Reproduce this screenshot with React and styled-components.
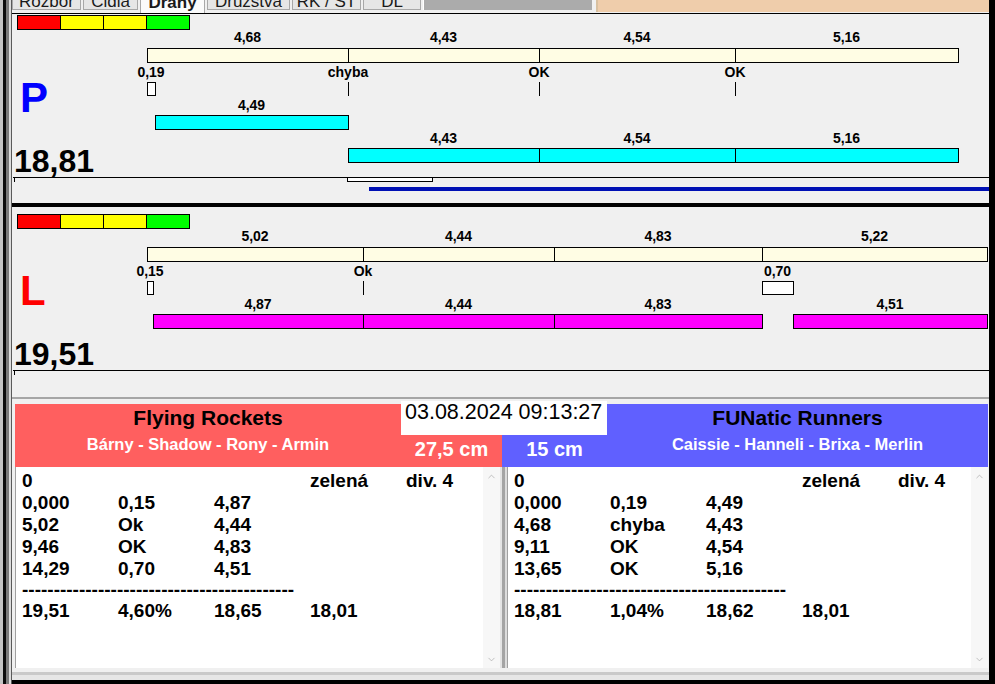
import React from 'react';
import styled, { createGlobalStyle } from 'styled-components';
import { ChevronUp, ChevronDown } from 'lucide-react';

const GlobalStyle = createGlobalStyle`
  html, body {
    margin: 0;
    padding: 0;
  }
  body {
    background: #111;
    font-family: "Liberation Sans", Arial, sans-serif;
  }
`;

// page x of the left edge of the lane panels
const ORIGIN_X = 12;
const px = (x) => x - ORIGIN_X;

// vertical layout of a track (relative to the track top)
const LABEL_TOP = 15;
const BAR_TOP = 33;
const TICK_LABEL_TOP = 50;
const TICK_TOP = 67;
const ROW_LABEL_TOP = [83, 116];
const ROW_BAR_TOP = [100, 133];

const lanes = [
  {
    id: 'P',
    color: '#0000ff',
    time: '18,81',
    height: 189,
    trackTop: 1,
    split: [147, 348, 539, 735, 958],
    splitLabels: ['4,68', '4,43', '4,54', '5,16'],
    ticks: [
      { x: 147, w: 8, label: '0,19' },
      { x: 348, label: 'chyba' },
      { x: 539, label: 'OK' },
      { x: 735, label: 'OK' },
    ],
    runs: [
      { row: 0, from: 155, to: 348, label: '4,49' },
      { row: 1, from: 348, to: 539, label: '4,43' },
      { row: 1, from: 539, to: 735, label: '4,54' },
      { row: 1, from: 735, to: 958, label: '5,16' },
    ],
    runColor: '#00ffff',
    mark: { from: 347, to: 433 },
    progressFrom: 369,
  },
  {
    id: 'L',
    color: '#ff0000',
    time: '19,51',
    height: 190,
    trackTop: 7,
    split: [147, 363, 554, 762, 987],
    splitLabels: ['5,02', '4,44', '4,83', '5,22'],
    ticks: [
      { x: 147, w: 6, label: '0,15' },
      { x: 363, label: 'Ok' },
      { x: 762, w: 31, label: '0,70' },
    ],
    runs: [
      { row: 0, from: 153, to: 363, label: '4,87' },
      { row: 0, from: 363, to: 554, label: '4,44' },
      { row: 0, from: 554, to: 762, label: '4,83' },
      { row: 0, from: 793, to: 987, label: '4,51' },
    ],
    runColor: '#ff00ff',
  },
];

const tabs = [
  { label: 'Rozbor', w: 69 },
  { label: 'Čidla', w: 55 },
  { label: 'Dráhy', w: 65, active: true },
  { label: 'Družstva', w: 83 },
  { label: 'RK / ST', w: 69 },
  { label: 'DL', w: 58 },
];

const teams = [
  {
    name: 'Flying Rockets',
    members: 'Bárny - Shadow - Rony - Armin',
    distance: '27,5 cm',
    bg: '#ff5f5f',
    side: 'left',
    rows: [
      ['0', '', '', 'zelená', 'div. 4'],
      ['0,000', '0,15', '4,87'],
      ['5,02', 'Ok', '4,44'],
      ['9,46', 'OK', '4,83'],
      ['14,29', '0,70', '4,51'],
      'dash',
      ['19,51', '4,60%', '18,65', '18,01'],
    ],
  },
  {
    name: 'FUNatic Runners',
    members: 'Caissie - Hanneli - Brixa - Merlin',
    distance: '15 cm',
    bg: '#6060ff',
    side: 'right',
    rows: [
      ['0', '', '', 'zelená', 'div. 4'],
      ['0,000', '0,19', '4,49'],
      ['4,68', 'chyba', '4,43'],
      ['9,11', 'OK', '4,54'],
      ['13,65', 'OK', '5,16'],
      'dash',
      ['18,81', '1,04%', '18,62', '18,01'],
    ],
  },
];

const Screen = styled.div`
  width: 995px;
  height: 684px;
  display: flex;
  overflow: hidden;
`;

const EdgeStrip = styled.div`
  flex: none;
  width: 11px;
  background: linear-gradient(
    to right,
    #c4c4c4 0 3px,
    #0c0c0c 3px 6px,
    #7a7a7a 6px 9px,
    #dcdcdc 9px 11px
  );
`;

const RightEdge = styled.div`
  flex: none;
  width: 6px;
  background: #000;
`;

const Main = styled.div`
  flex: 1;
  min-width: 0;
  display: flex;
  flex-direction: column;
  background: #f0f0f0;
  border-left: 1px solid #5a5a5a;
`;

const TabStrip = styled.div`
  flex: none;
  height: 13px;
  display: flex;
  gap: 2px;
  align-items: flex-start;
  background: #f0f0f0;
  border-bottom: 1px solid #000;
`;

const Tab = styled.div`
  flex: none;
  width: ${(p) => p.$w}px;
  height: ${(p) => (p.$active ? 13 : 10)}px;
  box-sizing: border-box;
  display: flex;
  align-items: flex-end;
  justify-content: center;
  overflow: hidden;
  background: ${(p) => (p.$active ? '#fbfbfb' : '#e6e6e6')};
  border: 1px solid #a8a8a8;
  border-top: none;
  border-bottom: ${(p) => (p.$active ? 'none' : '1px solid #a8a8a8')};
`;

const TabLabel = styled.span`
  font-size: 17px;
  line-height: 17px;
  margin-bottom: ${(p) => (p.$active ? 2 : -1)}px;
  color: #1a1a1a;
  font-weight: ${(p) => (p.$active ? 'bold' : 'normal')};
  white-space: nowrap;
`;

const GrayFill = styled.div`
  flex: none;
  width: 168px;
  height: 10px;
  background: #ababab;
  border-left: 1px solid #fff;
`;

const PeachFill = styled.div`
  flex: 1;
  height: 12px;
  margin-left: 2px;
  background: #efcdab;
  border-left: 2px solid #d8c0a0;
`;

const LanePanel = styled.section`
  position: relative;
  flex: none;
  height: ${(p) => p.$h}px;
  box-sizing: border-box;
  padding-top: 63px;
  display: flex;
  flex-direction: column;
  background: #f0f0f0;
`;

const LaneDivider = styled.div`
  flex: none;
  height: 4px;
  background: #000;
`;

const Track = styled.div`
  position: absolute;
  left: 0;
  right: 0;
  height: 150px;
`;

const Scale = styled.div`
  display: flex;
  margin-left: 5px;
`;

const ScaleCell = styled.div`
  width: 44px;
  height: 15px;
  box-sizing: border-box;
  border: 1px solid #000;
  background: ${(p) => p.$c};
  & + & {
    margin-left: -1px;
  }
`;

const Segment = styled.div`
  position: absolute;
  height: 15px;
  box-sizing: border-box;
  border: 1px solid #000;
  background: ${(p) => p.$fill};
`;

const Label = styled.div`
  position: absolute;
  transform: translateX(-50%);
  font-size: 14px;
  line-height: 14px;
  font-weight: bold;
  color: #000;
  white-space: nowrap;
`;

const TickLine = styled.div`
  position: absolute;
  width: 1px;
  height: 14px;
  background: #000;
`;

const TickBox = styled.div`
  position: absolute;
  height: 14px;
  box-sizing: border-box;
  border: 1px solid #000;
  background: #fff;
`;

const Letter = styled.div`
  margin-left: 8px;
  height: 42px;
  font-size: 42px;
  line-height: 42px;
  font-weight: bold;
  color: ${(p) => p.$color};
`;

const BigTime = styled.div`
  margin: 27px 0 0 2px;
  height: 30px;
  font-size: 32px;
  line-height: 30px;
  font-weight: bold;
  color: #000;
`;

const Baseline = styled.div`
  position: relative;
  margin: 1px 0 0 1px;
  height: 1px;
  background: #000;
  &::before {
    content: '';
    position: absolute;
    left: 1px;
    top: 1px;
    width: 1px;
    height: 4px;
    background: #000;
  }
`;

const Mark = styled.div`
  position: absolute;
  top: 0;
  height: 5px;
  box-sizing: border-box;
  border: 1px solid #000;
  background: #fff;
`;

const Progress = styled.div`
  margin-top: 9px;
  height: 4px;
  background: #0010b4;
`;

const Scoreboard = styled.div`
  position: relative;
  flex: 1;
  display: flex;
  flex-direction: column;
  background: #f0f0f0;
  border-top: 2px solid #a6a6a6;
  padding: 5px 1px 0 3px;
`;

const HeaderRow = styled.div`
  display: grid;
  grid-template-columns: 487px 1fr;
`;

const TeamHeader = styled.div`
  display: grid;
  grid-template-columns: ${(p) => (p.$side === 'left' ? '386px 1fr' : '105px 1fr')};
  grid-template-rows: 28px 35px;
  background: ${(p) => p.$bg};
  text-align: center;
`;

const TeamName = styled.div`
  grid-row: 1;
  grid-column: ${(p) => (p.$side === 'left' ? 1 : 2)};
  font-size: 21px;
  line-height: 28px;
  font-weight: bold;
  color: #000;
`;

const Members = styled.div`
  grid-row: 2;
  grid-column: ${(p) => (p.$side === 'left' ? 1 : 2)};
  align-self: start;
  padding-top: 2px;
  font-size: 16.5px;
  line-height: 20px;
  font-weight: bold;
  color: #fff;
`;

const Distance = styled.div`
  grid-row: 2;
  grid-column: ${(p) => (p.$side === 'left' ? 2 : 1)};
  align-self: center;
  font-size: 20px;
  font-weight: bold;
  color: #fff;
`;

const DateBox = styled.div`
  position: absolute;
  left: 389px;
  top: 2px;
  width: 206px;
  height: 34px;
  box-sizing: border-box;
  padding: 1px 0 0 4px;
  background: #fff;
  font-size: 21.5px;
  line-height: 1;
  color: #000;
  white-space: nowrap;
`;

const ListRow = styled.div`
  display: grid;
  grid-template-columns: 485px 481px;
  column-gap: 7px;
  height: 201px;
  background: linear-gradient(
    to right,
    transparent 0 485px,
    #e4e4e4 485px 487px,
    #a4a4a4 487px 490px,
    #dcdcdc 490px 492px,
    transparent 492px
  );
`;

const ListBox = styled.div`
  display: flex;
  min-width: 0;
  overflow: hidden;
  background: #fff;
  box-shadow: inset 1px 0 0 #a0a0a0;
`;

const Lines = styled.div`
  flex: 1;
  min-width: 0;
  padding: 3px 0 0 7px;
`;

const Line = styled.div`
  display: grid;
  grid-template-columns: repeat(4, 96px) auto;
  height: ${(p) => (p.$dash ? 20 : 22)}px;
  font-size: 19px;
  line-height: ${(p) => (p.$dash ? 20 : 22)}px;
  font-weight: bold;
  color: #000;
  white-space: nowrap;
`;

const Dashes = styled.span`
  grid-column: 1 / -1;
`;

const Scrollbar = styled.div`
  flex: none;
  width: 17px;
  display: flex;
  flex-direction: column;
  align-items: center;
  justify-content: space-between;
  padding: 4px 0 3px;
  background: #f7f7f7;
  color: #a8a8a8;
`;

const Footer = styled.div`
  flex: 1;
  background: linear-gradient(
    to bottom,
    #f0f0f0 0 4px,
    #c9c9c9 4px 7px,
    #e6e6e6 7px 12px,
    #000 12px
  );
  margin: 0 -1px 0 -3px;
`;

function Lane({ lane }) {
  const { split, splitLabels, ticks, runs, runColor } = lane;
  return (
    <LanePanel $h={lane.height}>
      <Track style={{ top: lane.trackTop }}>
        <Scale>
          {['#ff0000', '#ffff00', '#ffff00', '#00ff00'].map((c, i) => (
            <ScaleCell key={i} $c={c} />
          ))}
        </Scale>
        {splitLabels.map((label, i) => {
          const from = split[i];
          const to = split[i + 1];
          return (
            <React.Fragment key={'s' + i}>
              <Label style={{ left: px((from + to) / 2), top: LABEL_TOP }}>{label}</Label>
              <Segment $fill="#fffde4" style={{ left: px(from), width: to - from + 1, top: BAR_TOP }} />
            </React.Fragment>
          );
        })}
        {ticks.map((t, i) => (
          <React.Fragment key={'t' + i}>
            <Label style={{ left: px(t.x + (t.w ? t.w / 2 : 0)), top: TICK_LABEL_TOP }}>{t.label}</Label>
            {t.w ? (
              <TickBox style={{ left: px(t.x), width: t.w + 1, top: TICK_TOP }} />
            ) : (
              <TickLine style={{ left: px(t.x), top: TICK_TOP }} />
            )}
          </React.Fragment>
        ))}
        {runs.map((r, i) => (
          <React.Fragment key={'r' + i}>
            <Label style={{ left: px((r.from + r.to) / 2), top: ROW_LABEL_TOP[r.row] }}>{r.label}</Label>
            <Segment
              $fill={runColor}
              style={{ left: px(r.from), width: r.to - r.from + 1, top: ROW_BAR_TOP[r.row] }}
            />
          </React.Fragment>
        ))}
      </Track>
      <Letter $color={lane.color}>{lane.id}</Letter>
      <BigTime>{lane.time}</BigTime>
      <Baseline>
        {lane.mark && (
          <Mark style={{ left: lane.mark.from - 13, width: lane.mark.to - lane.mark.from }} />
        )}
      </Baseline>
      {lane.progressFrom && <Progress style={{ marginLeft: px(lane.progressFrom) }} />}
    </LanePanel>
  );
}

function TeamList({ team }) {
  return (
    <ListBox>
      <Lines>
        {team.rows.map((row, i) =>
          row === 'dash' ? (
            <Line key={i} $dash>
              <Dashes>{'-'.repeat(43)}</Dashes>
            </Line>
          ) : (
            <Line key={i}>
              {row.map((cell, j) => (
                <span key={j}>{cell}</span>
              ))}
            </Line>
          )
        )}
      </Lines>
      <Scrollbar>
        <ChevronUp size={11} strokeWidth={1.5} />
        <ChevronDown size={11} strokeWidth={1.5} />
      </Scrollbar>
    </ListBox>
  );
}

export default function App() {
  return (
    <>
      <GlobalStyle />
      <Screen>
        <EdgeStrip />
        <Main>
          <TabStrip>
            {tabs.map((t) => (
              <Tab key={t.label} $w={t.w} $active={t.active}>
                <TabLabel $active={t.active}>{t.label}</TabLabel>
              </Tab>
            ))}
            <GrayFill />
            <PeachFill />
          </TabStrip>
          <Lane lane={lanes[0]} />
          <LaneDivider />
          <Lane lane={lanes[1]} />
          <Scoreboard>
            <HeaderRow>
              {teams.map((team) => (
                <TeamHeader key={team.name} $bg={team.bg} $side={team.side}>
                  <TeamName $side={team.side}>{team.name}</TeamName>
                  <Members $side={team.side}>{team.members}</Members>
                  <Distance $side={team.side}>{team.distance}</Distance>
                </TeamHeader>
              ))}
            </HeaderRow>
            <ListRow>
              {teams.map((team) => (
                <TeamList key={team.name} team={team} />
              ))}
            </ListRow>
            <Footer />
            <DateBox>03.08.2024 09:13:27</DateBox>
          </Scoreboard>
        </Main>
        <RightEdge />
      </Screen>
    </>
  );
}
